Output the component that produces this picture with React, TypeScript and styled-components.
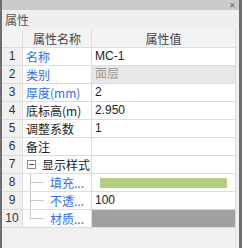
import React from "react";
import styled, { createGlobalStyle } from "styled-components";

const Global = createGlobalStyle`
  html, body { margin: 0; padding: 0; background: #f0f0f0; }
  body { font-family: "Noto Sans CJK SC", "Liberation Sans", sans-serif; font-size: 12px; }
`;

const Panel = styled.div`
  width: 242px;
  height: 248px;
  box-sizing: border-box;
  border-left: 2px solid #6e6e6e;
  border-right: 3px solid #6e6e6e;
  background: #f0f0f0;
  display: flex;
  flex-direction: column;
  overflow: hidden;
`;

const TitleBar = styled.div`
  height: 10px;
  background: #cbcbcb;
  display: flex;
  justify-content: flex-end;
  align-items: center;
  padding-right: 3px;
  color: #666;
  font-size: 8px;
  line-height: 10px;
`;

const Caption = styled.div`
  height: 20px;
  background: #efefef;
  color: #555;
  font-size: 12px;
  line-height: 20px;
  padding-left: 3px;
`;

const Body = styled.div`
  display: flex;
  flex: 1;
  padding-right: 3px;
`;

const Grid = styled.div`
  display: grid;
  grid-template-columns: 21px 69px 1fr;
  grid-auto-rows: 18px;
  align-content: start;
  flex: 1;
  border-right: 1px solid #dcdcdc;
`;

const HeadCell = styled.div<{ $last?: boolean }>`
  background: #f3f3f3;
  border-right: ${(p) => (p.$last ? "none" : "1px solid #dcdcdc")};
  border-bottom: 1px solid #dcdcdc;
  color: #444;
  text-align: center;
  line-height: 17px;
  height: 17px;
  font-size: 12px;
`;

const NumCell = styled.div`
  background: #f0f0f0;
  border-right: 1px solid #dcdcdc;
  border-bottom: 1px solid #dcdcdc;
  color: #333;
  text-align: center;
  line-height: 17px;
  font-family: "Liberation Sans", sans-serif;
  font-size: 12px;
`;

const NameCell = styled.div<{ $blue?: boolean; $indent?: number }>`
  background: #fff;
  border-right: 1px solid #dcdcdc;
  border-bottom: 1px solid #dcdcdc;
  color: ${(p) => (p.$blue ? "#2f6fe8" : "#222")};
  line-height: 17px;
  padding-left: ${(p) => p.$indent ?? 3}px;
  white-space: nowrap;
  overflow: hidden;
  position: relative;
  display: flex;
  align-items: center;
`;

const ValueCell = styled.div<{ $gray?: boolean; $flush?: boolean }>`
  background: ${(p) => (p.$gray ? "#e8e8e8" : "#fff")};
  border-bottom: 1px solid #dcdcdc;
  color: ${(p) => (p.$gray ? "#999" : "#222")};
  line-height: 17px;
  padding-left: ${(p) => (p.$flush ? 0 : 3)}px;
  font-family: "Liberation Sans", "Noto Sans CJK SC", sans-serif;
  display: flex;
  align-items: center;
`;

const ColorBar = styled.div<{ $color: string; $inset: number; $h: number }>`
  height: ${(p) => p.$h}px;
  flex: 1;
  margin-left: ${(p) => p.$inset}px;
  margin-right: ${(p) => p.$inset}px;
  background: ${(p) => p.$color};
`;

const Toggle = styled.span`
  width: 7px;
  height: 7px;
  border: 1px solid #888;
  display: inline-flex;
  align-items: center;
  justify-content: center;
  margin-right: 6px;
  background: #fff;
  flex-shrink: 0;
  &::after {
    content: "";
    width: 5px;
    height: 1px;
    background: #444;
  }
`;

const Branch = styled.span<{ $last?: boolean }>`
  position: absolute;
  left: 7px;
  top: 0;
  width: 13px;
  height: ${(p) => (p.$last ? "9px" : "100%")};
  border-left: 1px solid #c8c8c8;
  &::after {
    content: "";
    position: absolute;
    left: 0;
    top: 8px;
    width: 13px;
    border-top: 1px solid #c8c8c8;
  }
`;

const rows = [
  { n: "1", name: "名称", blue: true, value: "MC-1" },
  { n: "2", name: "类别", blue: true, value: "面层", gray: true },
  { n: "3", name: "厚度(mm)", blue: true, value: "2" },
  { n: "4", name: "底标高(m)", value: "2.950" },
  { n: "5", name: "调整系数", value: "1" },
  { n: "6", name: "备注", value: "" },
];

export default function App() {
  return (
    <>
      <Global />
      <Panel>
        <TitleBar>✕</TitleBar>
        <Caption>属性</Caption>
        <Body>
          <Grid>
            <HeadCell />
            <HeadCell>属性名称</HeadCell>
            <HeadCell $last>属性值</HeadCell>
            {rows.map((r) => (
              <React.Fragment key={r.n}>
                <NumCell>{r.n}</NumCell>
                <NameCell $blue={r.blue}>{r.name}</NameCell>
                <ValueCell $gray={r.gray}>{r.value}</ValueCell>
              </React.Fragment>
            ))}
            <NumCell>7</NumCell>
            <NameCell $indent={4}>
              <Toggle />
              显示样式
            </NameCell>
            <ValueCell />
            <NumCell>8</NumCell>
            <NameCell $blue $indent={27}>
              <Branch />
              填充...
            </NameCell>
            <ValueCell $flush>
              <ColorBar $color="#b5cd82" $inset={8} $h={10} />
            </ValueCell>
            <NumCell>9</NumCell>
            <NameCell $blue $indent={27}>
              <Branch />
              不透...
            </NameCell>
            <ValueCell>100</ValueCell>
            <NumCell>10</NumCell>
            <NameCell $blue $indent={27}>
              <Branch $last />
              材质...
            </NameCell>
            <ValueCell $flush>
              <ColorBar $color="#a0a0a3" $inset={0} $h={17} />
            </ValueCell>
          </Grid>
        </Body>
      </Panel>
    </>
  );
}
